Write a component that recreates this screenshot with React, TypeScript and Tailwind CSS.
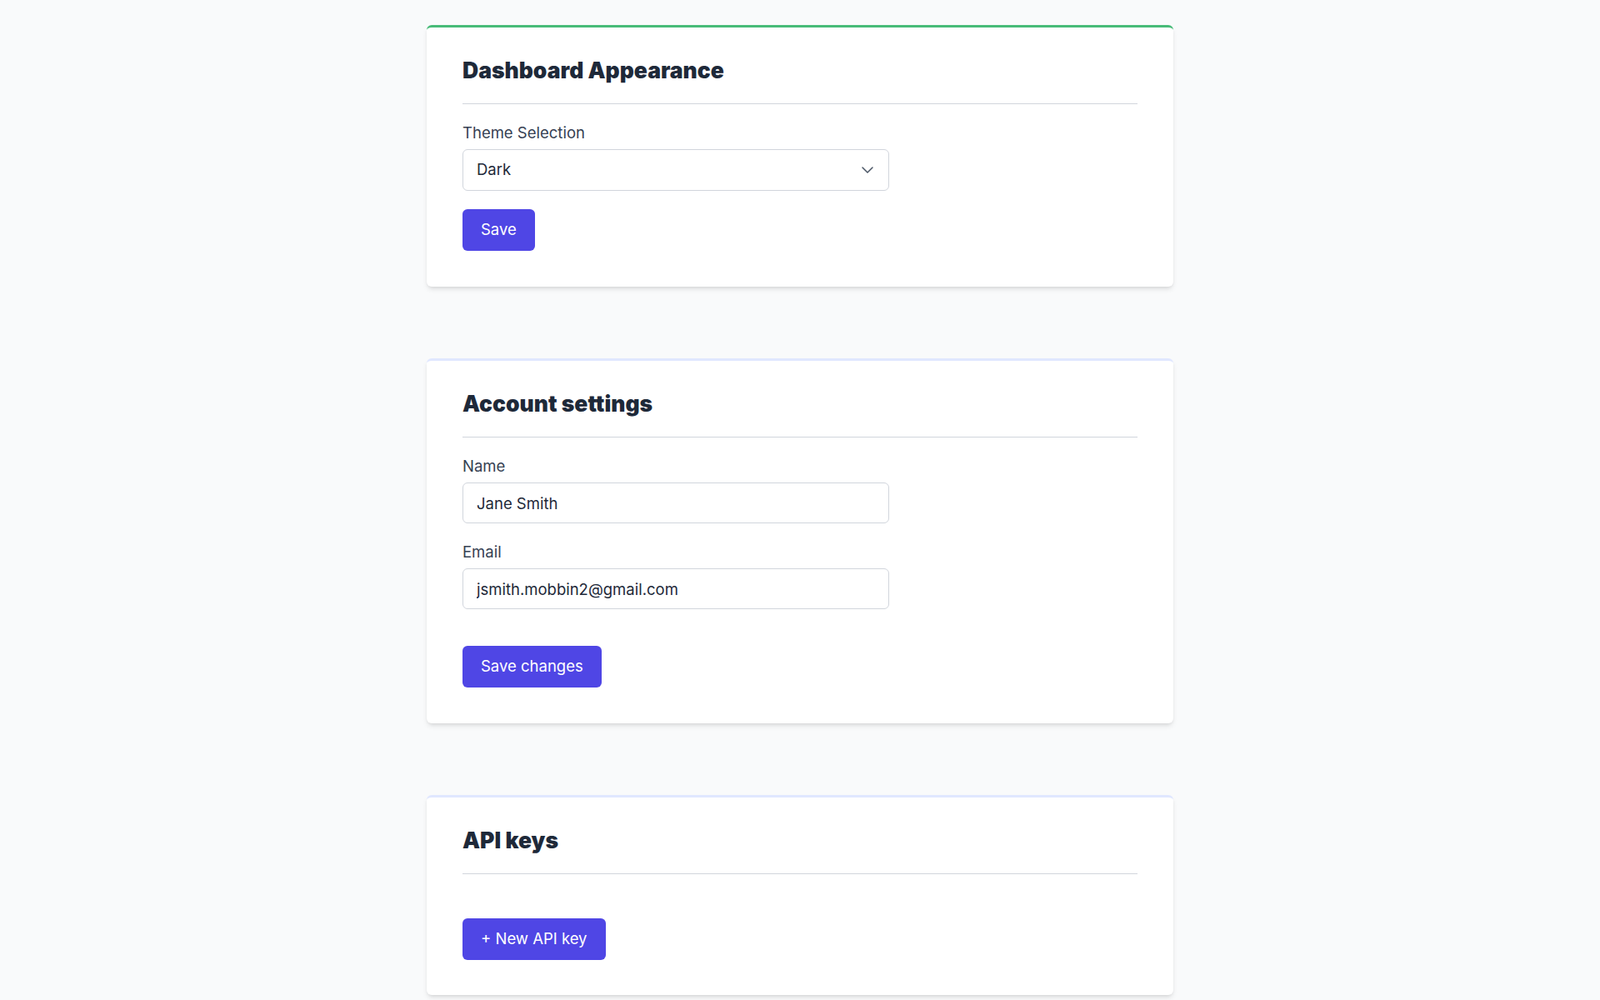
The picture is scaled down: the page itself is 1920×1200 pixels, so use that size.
import { ChevronDown } from "lucide-react";

function Card({
  title,
  accent,
  pb = "pb-[43px]",
  children,
}: {
  title: string;
  accent: string;
  pb?: string;
  children: React.ReactNode;
}) {
  return (
    <section
      className={`w-[896px] bg-white rounded-md shadow-md border-t-[3px] ${accent} px-[43px] pt-[35px] ${pb}`}
    >
      <h2 className="text-[26.5px] leading-8 font-black text-gray-800 pb-6 border-b border-gray-300">
        {title}
      </h2>
      {children}
    </section>
  );
}

function Field({ label, value }: { label: string; value: string }) {
  return (
    <div className="mt-5">
      <label className="block text-[18.5px] leading-7 text-gray-700 mb-1.5">{label}</label>
      <input
        readOnly
        value={value}
        className="w-[512px] h-[49px] px-4 rounded-md border border-gray-300 bg-white text-[18.5px] text-gray-800 outline-none"
      />
    </div>
  );
}

export default function App() {
  return (
    <div
      className="min-h-screen bg-gray-50 pt-[30px] pb-10 flex flex-col items-center gap-[86px]"
      style={{ fontFamily: "Inter, 'Noto Sans', sans-serif" }}
    >
      <Card title="Dashboard Appearance" accent="border-[#48bb78]">
        <div className="mt-5">
          <label className="block text-[18.5px] leading-7 text-gray-700 mb-1.5">Theme Selection</label>
          <div className="relative w-[512px] h-[50px] rounded-md border border-gray-300 bg-white flex items-center px-4 text-[18.5px] text-gray-800">
            Dark
            <ChevronDown
              size={24}
              strokeWidth={1.5}
              className="absolute right-[13px] top-1/2 -translate-y-1/2 text-gray-600"
            />
          </div>
        </div>
        <button className="mt-[22px] h-[50px] px-[22px] rounded-md bg-[#4f46e5] text-white text-[18.5px]">
          Save
        </button>
      </Card>

      <Card title="Account settings" accent="border-[#e0e7ff]">
        <Field label="Name" value="Jane Smith" />
        <Field label="Email" value="jsmith.mobbin2@gmail.com" />
        <button className="mt-[44px] h-[50px] px-[22px] rounded-md bg-[#4f46e5] text-white text-[18.5px]">
          Save changes
        </button>
      </Card>

      <Card title="API keys" accent="border-[#e0e7ff]" pb="pb-[42px]">
        <button className="mt-[53px] h-[50px] px-[22px] rounded-md bg-[#4f46e5] text-white text-[18.5px]">
          + New API key
        </button>
      </Card>
    </div>
  );
}
